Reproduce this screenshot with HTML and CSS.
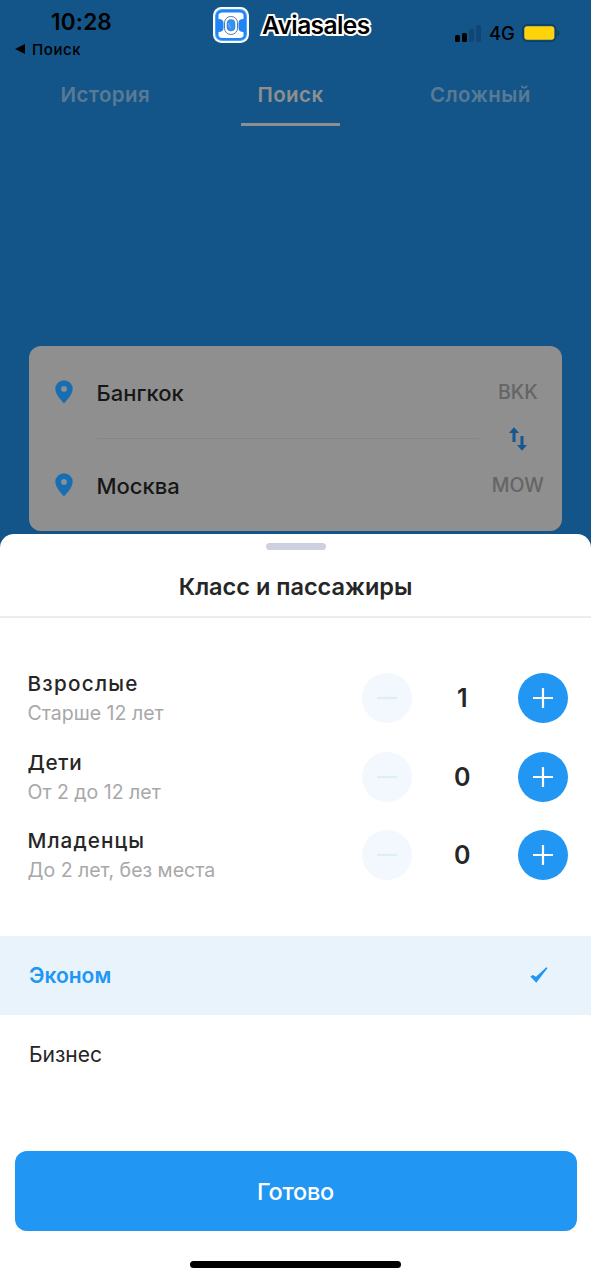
FILE: index.html
```html
<!DOCTYPE html>
<html lang="ru">
<head>
<meta charset="utf-8">
<title>Класс и пассажиры</title>
<link rel="stylesheet" href="styles.css">
</head>
<body>
<div class="screen">
  <div class="search">
    <header class="status">
      <div class="status-left">
        <div class="time">10:28</div>
        <div class="back"><svg width="11" height="10" viewBox="0 0 11 10"><path d="M0 5 10 0v10z"/></svg><span>Поиск</span></div>
      </div>
      <div class="brand">
        <svg class="logo" width="36" height="36" viewBox="0 0 36 36">
          <rect width="36" height="36" rx="8.5" fill="#fff"/>
          <rect x="2" y="2" width="32" height="32" rx="7" fill="#4aa5fb"/>
          <rect x="3" y="3" width="30" height="30" rx="6" fill="#2184f5"/>
          <path d="M5.500 7.500Q6.500 5.500 9 5.500h18q2.500 0 3.500 2V12q-5 0-5 4v5q0 4 5 4v4q-1 2-3.500 2H9q-2.500 0-3.500-2v-4q5 0 5-4v-5q0-4-5-4z" fill="#fff"/>
          <rect x="11.500" y="9.500" width="13" height="18" rx="6.300" fill="#fff" stroke="#3c6f9e" stroke-width=".9"/>
          <rect x="14" y="12.500" width="8" height="11.500" rx="4" fill="#3293fa" stroke="#2c6fae" stroke-width=".5"/>
          <path d="M15.500 16q0 3.500 2.500 5" fill="none" stroke="#9accff" stroke-width=".8"/>
        </svg>
        <span class="brand-name">Aviasales</span>
      </div>
      <div class="signal">
        <svg width="27" height="17" viewBox="0 0 27 17">
          <rect x="0" y="10" width="5" height="7" rx="1.500"/><rect x="7" y="8" width="5" height="9" rx="1.500"/>
          <rect x="14" y="4" width="5" height="13" rx="1.500" fill="#114575"/><rect x="21.300" y="0" width="4.700" height="17" rx="1.500" fill="#114575"/>
        </svg>
        <span class="network">4G</span>
        <svg width="38" height="18" viewBox="0 0 38 18">
          <rect x=".8" y=".8" width="33" height="16.400" rx="5" fill="#135588" stroke="#103d63" stroke-width="1.600"/>
          <rect x="2.300" y="2.300" width="30" height="13.400" rx="3" fill="#ffd30a"/>
          <path d="M35.500 6q2 .8 2 3t-2 3z" fill="#103d63"/>
        </svg>
      </div>
    </header>
    <nav class="tabs">
      <span class="tab tab-history">История</span>
      <span class="tab tab-active">Поиск</span>
      <span class="tab tab-complex">Сложный</span>
    </nav>
    <section class="route">
      <svg class="pin" width="18" height="24" viewBox="0 0 18 24"><path fill-rule="evenodd" d="M9 .3a8.700 8.700 0 0 0-8.700 8.700C.3 15 9 23.300 9 23.300S17.700 15 17.700 9A8.700 8.700 0 0 0 9 .3zM9 6a2.900 2.900 0 1 1 0 5.800A2.900 2.900 0 0 1 9 6z"/></svg>
      <span class="city city-from">Бангкок</span>
      <span class="code">BKK</span>
      <hr class="route-line">
      <svg class="swap" width="18" height="24" viewBox="0 0 18 24"><path d="M5 .3 10 6H6.500v9h-3V6H0zM13 23.700 8 18h3.500V9h3v9H18z"/></svg>
      <svg class="pin" width="18" height="24" viewBox="0 0 18 24"><path fill-rule="evenodd" d="M9 .3a8.700 8.700 0 0 0-8.700 8.700C.3 15 9 23.300 9 23.300S17.700 15 17.700 9A8.700 8.700 0 0 0 9 .3zM9 6a2.900 2.900 0 1 1 0 5.800A2.900 2.900 0 0 1 9 6z"/></svg>
      <span class="city city-to">Москва</span>
      <span class="code">MOW</span>
    </section>
  </div>
  <main class="sheet">
    <div class="handle"></div>
    <h1 class="title"><span>Класс и пассажиры</span></h1>
    <section class="passengers">
      <div class="row">
        <div class="labels"><div class="label adults">Взрослые</div><div class="hint adults-hint">Старше 12 лет</div></div>
        <button class="round minus"><svg width="20" height="20" viewBox="0 0 20 20"><path d="M0 10h20"/></svg></button>
        <span class="count">1</span>
        <button class="round plus"><svg width="20" height="20" viewBox="0 0 20 20"><path d="M0 10h20M10 0v20"/></svg></button>
      </div>
      <div class="row">
        <div class="labels"><div class="label children">Дети</div><div class="hint children-hint">От 2 до 12 лет</div></div>
        <button class="round minus"><svg width="20" height="20" viewBox="0 0 20 20"><path d="M0 10h20"/></svg></button>
        <span class="count">0</span>
        <button class="round plus"><svg width="20" height="20" viewBox="0 0 20 20"><path d="M0 10h20M10 0v20"/></svg></button>
      </div>
      <div class="row">
        <div class="labels"><div class="label infants">Младенцы</div><div class="hint infants-hint">До 2 лет, без места</div></div>
        <button class="round minus"><svg width="20" height="20" viewBox="0 0 20 20"><path d="M0 10h20"/></svg></button>
        <span class="count">0</span>
        <button class="round plus"><svg width="20" height="20" viewBox="0 0 20 20"><path d="M0 10h20M10 0v20"/></svg></button>
      </div>
    </section>
    <div class="option option-selected"><span>Эконом</span><svg width="18" height="16" viewBox="0 0 18 16"><path d="M.3 9.500 2.800 8l3.200 1.800L16.300.3l1.300.8L6.300 15.800z" fill="#2196f3"/></svg></div>
    <div class="option option-business"><span>Бизнес</span></div>
    <button class="done"><span>Готово</span></button>
    <div class="home"></div>
  </main>
</div>
</body>
</html>
```
FILE: styles.css
```css
* { box-sizing: border-box; }
body { margin: 0; font-family: Inter, "Liberation Sans", sans-serif; color: #262626; background: #135588; }
button { border: 0; padding: 0; font: inherit; }
svg { display: block; flex: none; }
span { white-space: nowrap; }
.screen { width: 591px; height: 1280px; display: flex; flex-direction: column; overflow: hidden; background: #135588; }
.search { height: 534px; flex: none; }

.status { height: 65px; display: grid; grid-template-columns: 212.500px 242.500px 1fr; color: #000; }
.time { height: 22px; margin: 11px 0 0 51px; font-size: 22.500px; line-height: 22px; font-weight: 600; letter-spacing: .2px; }
.back { display: flex; align-items: center; gap: 6px; height: 18px; margin: 7px 0 0 15px; font-size: 15px; line-height: 18px; font-weight: 500; letter-spacing: .6px; }
.back span { padding-top: 1px; }
.brand { display: flex; align-items: center; height: 36px; margin-top: 6.500px; gap: 13.500px; }
.brand-name { font-size: 24.500px; line-height: 30px; font-weight: 600; letter-spacing: -.6px; paint-order: stroke fill; -webkit-text-stroke: 4px #fff; }
.signal { display: flex; align-items: center; height: 18px; margin-top: 24px; gap: 7px; }
.network { width: 26px; font-size: 18.500px; font-weight: 500; line-height: 18px; letter-spacing: -.2px; }

.tabs { height: 61px; display: grid; grid-template-columns: 241px 99px 1fr; }
.tab { height: 61px; line-height: 60px; font-size: 20.500px; font-weight: 600; letter-spacing: .4px; color: #597a94; }
.tab-history { padding-left: 60.500px; }
.tab-active { color: #8f8f8f; text-align: center; border-bottom: 3px solid #8f8f8f; }
.tab-complex { padding-left: 90px; }

.route { margin: 220px 29px 0; height: 185px; border-radius: 12px; background: #8f8f8f; display: grid; grid-template-columns: 67.500px 382px 1fr; grid-template-rows: 92px 1px 92px; align-items: center; }
.pin { margin-left: 26px; fill: #176eb3; }
.city { font-size: 22px; line-height: 24px; font-weight: 450; color: #171717; padding-top: 1px; }
.code { justify-self: center; margin-right: 5px; font-size: 19.500px; font-weight: 500; color: #656565; }
.route-line { grid-column: 2; width: 382px; height: 1px; margin: 0; border: 0; background: #81858f; }
.swap { justify-self: center; margin-right: 5px; fill: #14588f; }

.sheet { flex: 1; display: flex; flex-direction: column; background: #fff; border-radius: 14px 14px 0 0; }
.handle { width: 60px; height: 7px; margin: 9px auto 0; border-radius: 4px; background: #cdd1de; }
.title { height: 68px; margin: 0; padding-top: 22px; text-align: center; font-size: 23.500px; line-height: 29px; font-weight: 600; border-bottom: 2px solid #ececec; }
.passengers { padding: 41px 23px 0 27.500px; }
.row { height: 78.500px; display: grid; grid-template-columns: 334.500px 50px 106px 50px; align-items: center; }
.label { font-size: 20.700px; line-height: 28px; font-weight: 500; }
.adults { letter-spacing: 1.250px; }
.children { letter-spacing: .700px; }
.infants { letter-spacing: 1.050px; }
.hint { font-size: 19.500px; line-height: 30px; color: #a8a8a8; }
.labels { margin-top: 2px; }
.round { width: 50px; height: 50px; border-radius: 50%; display: grid; place-items: center; }
.round svg { fill: none; stroke-width: 2.200px; }
.minus { background: #f2f8fd; }
.minus path { stroke: #deeff4; }
.plus { background: #2196f3; }
.plus path { stroke: #fff; }
.count { text-align: center; padding-right: 5.500px; font-size: 25px; font-weight: 600; }
.option { height: 79px; padding: 0 43px 0 29px; display: flex; align-items: center; justify-content: space-between; font-size: 21px; }
.option-selected { margin-top: 41.300px; background: #e8f3fc; color: #2196f3; font-weight: 600; }
.option-business { height: 78px; padding-top: 1px; }
.done { height: 80px; margin: 58px 14.500px 0; padding-top: 1px; border-radius: 12px; background: #2196f3; color: #fff; font-size: 23.500px; font-weight: 500; letter-spacing: -.3px; }
.home { width: 211px; height: 7px; margin: 30px 0 0 190px; border-radius: 4px; background: #000; }
```
